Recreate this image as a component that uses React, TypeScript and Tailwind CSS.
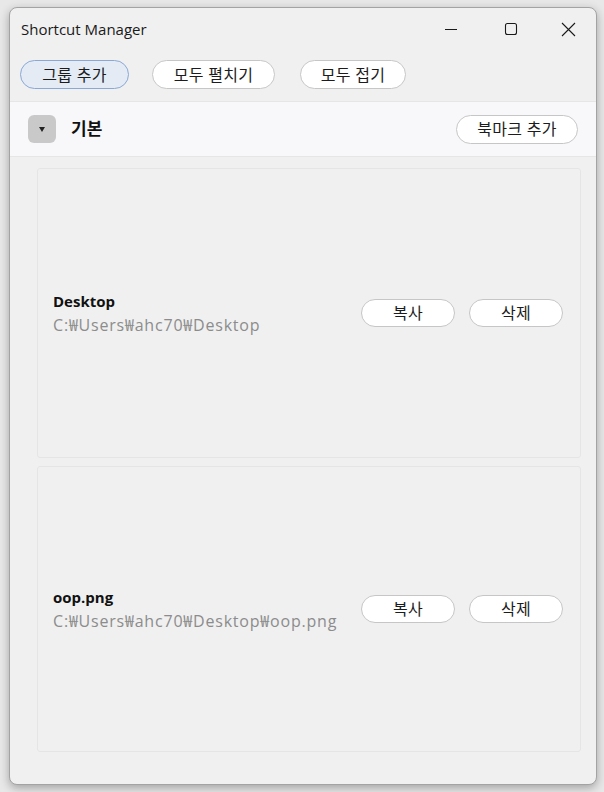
import React from "react";

const FONT = '"Segoe UI", "Open Sans", "Noto Sans CJK KR", sans-serif';

function PillButton({
  label,
  className = "",
}: {
  label: string;
  className?: string;
}) {
  return (
    <button
      className={`flex items-center justify-center rounded-full border border-[#c6c6c6] bg-white text-[16px] tracking-[0.3px] text-[#1c1c1c] ${className}`}
    >
      {label}
    </button>
  );
}

interface Bookmark {
  name: string;
  path: string;
  height: string;
}

const bookmarks: Bookmark[] = [
  { name: "Desktop", path: "C:₩Users₩ahc70₩Desktop", height: "h-[290px]" },
  { name: "oop.png", path: "C:₩Users₩ahc70₩Desktop₩oop.png", height: "h-[286px]" },
];

export default function App() {
  return (
    <div
      className="flex h-[792px] w-[604px] bg-[#e8e8e8] pb-[7px] pl-[9px] pr-[7px] pt-[7px]"
      style={{ fontFamily: FONT }}
    >
      <div className="flex flex-1 flex-col overflow-hidden rounded-[8px] border border-[#a3a3a3] bg-[#f0f0f0] shadow-[0_3px_10px_rgba(0,0,0,0.3)]">
        {/* title bar */}
        <div className="flex h-[42px] shrink-0 items-center pl-[11px]">
          <span className="text-[15px] text-[#1a1a1a]">Shortcut Manager</span>
          <div className="ml-auto flex h-full items-center">
            <div className="flex w-[58px] items-center justify-center">
              <svg width="14" height="14" viewBox="0 0 14 14">
                <path d="M1 7.5h12" stroke="#1a1a1a" strokeWidth="1.1" />
              </svg>
            </div>
            <div className="flex w-[58px] items-center justify-center pl-[4px]">
              <svg width="14" height="14" viewBox="0 0 14 14">
                <rect x="1.5" y="1.5" width="11" height="11" rx="2" fill="none" stroke="#1a1a1a" strokeWidth="1.1" />
              </svg>
            </div>
            <div className="flex w-[58px] items-center justify-center pl-[2px]">
              <svg width="15" height="15" viewBox="0 0 15 15">
                <path d="M1 1l13 13M14 1L1 14" stroke="#1a1a1a" strokeWidth="1.1" />
              </svg>
            </div>
          </div>
        </div>

        {/* toolbar */}
        <div className="flex shrink-0 items-center px-[10px] pb-[12px] pt-[10px]">
          <button className="flex h-[29px] w-[109px] items-center justify-center rounded-full border-[1.5px] border-[#8aa8d6] bg-[#e4ebf5] text-[16px] tracking-[0.3px] text-[#1c1c1c]">
            그룹 추가
          </button>
          <PillButton label="모두 펼치기" className="ml-[23px] h-[29px] w-[123px]" />
          <PillButton label="모두 접기" className="ml-[25px] h-[29px] w-[106px]" />
        </div>

        {/* group header */}
        <div className="flex h-[56px] shrink-0 items-center border-b border-t border-[#e6e6e6] bg-[#f8f8fa] pl-[18px] pr-[18px]">
          <div className="flex h-[28px] w-[28px] items-center justify-center rounded-[6px] bg-[#c9c9c9]">
            <svg width="6" height="5" viewBox="0 0 6 5">
              <path d="M0 0h6L3 5z" fill="#222" />
            </svg>
          </div>
          <span className="ml-[15px] text-[17px] font-bold text-[#111]">기본</span>
          <PillButton label="북마크 추가" className="ml-auto h-[29px] w-[122px]" />
        </div>

        {/* bookmark list */}
        <div className="flex flex-1 flex-col gap-[8px] pl-[27px] pr-[15px] pt-[11px]">
          {bookmarks.map((b) => (
            <div
              key={b.name}
              className={`flex ${b.height} items-center rounded-[3px] border border-[#e5e5e5] bg-[#f0f0f0] pl-[15px] pr-[17px]`}
            >
              <div className="flex flex-col">
                <span className="text-[15px] font-bold leading-[24px] text-[#111]">{b.name}</span>
                <span className="text-[16px] leading-[24px] tracking-[0.8px] text-[#8c8c8c]">{b.path}</span>
              </div>
              <div className="ml-auto flex items-center gap-[14px]">
                <PillButton label="복사" className="h-[28px] w-[94px]" />
                <PillButton label="삭제" className="h-[28px] w-[94px]" />
              </div>
            </div>
          ))}
        </div>
      </div>
    </div>
  );
}
